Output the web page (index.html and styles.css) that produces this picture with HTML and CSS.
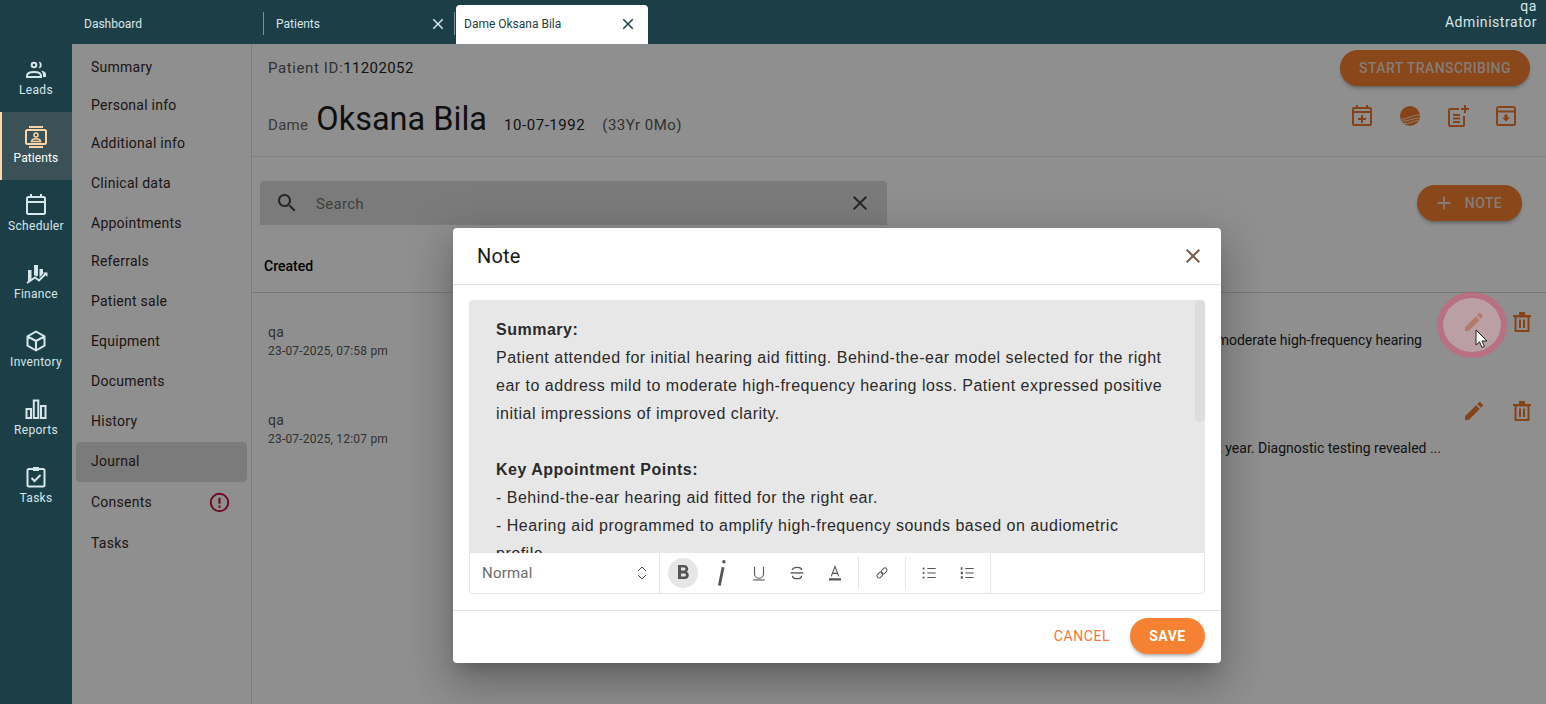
FILE: index.html
```html
<!DOCTYPE html>
<html lang="en">
<head>
<meta charset="utf-8">
<title>Patient journal</title>
<link rel="stylesheet" href="styles.css">
</head>
<body>
<div class="app">
  <header class="topbar">
    <div class="tab tab-dash"><span>Dashboard</span></div>
    <div class="tab tab-patients"><span>Patients</span>
      <svg class="tab-x" viewBox="0 0 24 24"><path d="M19 6.41L17.59 5 12 10.59 6.41 5 5 6.41 10.59 12 5 17.59 6.41 19 12 13.41 17.59 19 19 17.59 13.41 12z"/></svg>
    </div>
    <div class="tab tab-active"><span>Dame Oksana Bila</span>
      <svg class="tab-x" viewBox="0 0 24 24"><path d="M19 6.41L17.59 5 12 10.59 6.41 5 5 6.41 10.59 12 5 17.59 6.41 19 12 13.41 17.59 19 19 17.59 13.41 12z"/></svg>
    </div>
    <div class="user"><div>qa</div><div>Administrator</div></div>
  </header>
  <div class="body">
    <nav class="rail">
      <div class="rail-item">
        <svg viewBox="0 0 24 24" class="rail-icon"><circle cx="10" cy="8" r="2.300" fill="none" stroke="currentColor" stroke-width="2"/><path d="M14.500 4.800a3.200 3.200 0 0 1 0 6.400 5 5 0 0 0 0-6.400z" fill="currentColor"/><path d="M3 20v-1c0-2.500 3-4 7-4s7 1.500 7 4v1z" fill="none" stroke="currentColor" stroke-width="2"/><path d="M17 13.500c2.500.3 5 1.500 5 3.800V20h-3v-2c0-1.800-.8-3.300-2-4.500z" fill="currentColor"/></svg>
        <span>Leads</span>
      </div>
      <div class="rail-item rail-active">
        <svg viewBox="0 0 24 24" class="rail-icon"><path d="M5 1h14v2H5zM5 21h14v2H5z" fill="currentColor"/><rect x="2" y="5" width="20" height="14" rx="1.500" fill="none" stroke="currentColor" stroke-width="2"/><circle cx="12" cy="10" r="2" fill="none" stroke="currentColor" stroke-width="1.500"/><path d="M7.500 16.500c0-1.800 2-2.800 4.500-2.800s4.500 1 4.500 2.800z" fill="none" stroke="currentColor" stroke-width="1.500"/></svg>
        <span>Patients</span>
      </div>
      <div class="rail-item">
        <svg viewBox="0 0 24 24" class="rail-icon"><rect x="3" y="4" width="18" height="17" rx="1.500" fill="none" stroke="currentColor" stroke-width="2"/><path d="M3 8h18v2H3zM6 1h2v4H6zM16 1h2v4h-2z" fill="currentColor"/></svg>
        <span>Scheduler</span>
      </div>
      <div class="rail-item">
        <svg viewBox="0 0 24 24" class="rail-icon"><path d="M4 9h3.500v9.500L4 20.500zM10 4h4v10.500l-1.500 1-2.500-1.500zM15.500 8H19v5l-3.500 3.500z" fill="currentColor"/><path d="M3 22l8-5.500 4 3 7-7" fill="none" stroke="currentColor" stroke-width="2"/><path d="M19 11.500h4.500V16z" fill="currentColor"/></svg>
        <span>Finance</span>
      </div>
      <div class="rail-item">
        <svg viewBox="0 0 24 24" class="rail-icon"><path d="M12 2.500l8.500 4.800v9.400L12 21.500l-8.500-4.800V7.300zM3.500 7.300L12 12l8.500-4.700M12 12v9.500" fill="none" stroke="currentColor" stroke-width="2" stroke-linejoin="round"/></svg>
        <span>Inventory</span>
      </div>
      <div class="rail-item">
        <svg viewBox="0 0 24 24" class="rail-icon"><path d="M2.500 12h4.500v9H2.500zM9.800 3.500h4.500V21H9.800zM17 9h4.500v12H17z" fill="none" stroke="currentColor" stroke-width="2"/></svg>
        <span>Reports</span>
      </div>
      <div class="rail-item">
        <svg viewBox="0 0 24 24" class="rail-icon"><rect x="3.500" y="4" width="17" height="17.500" rx="1.500" fill="none" stroke="currentColor" stroke-width="2"/><path d="M9 2h6v4H9z" fill="currentColor"/><path d="M7.500 13l3 3 6-6" fill="none" stroke="currentColor" stroke-width="2"/></svg>
        <span>Tasks</span>
      </div>
    </nav>
    <aside class="subnav">
      <div class="sub-item">Summary</div>
      <div class="sub-item">Personal info</div>
      <div class="sub-item">Additional info</div>
      <div class="sub-item sub-gap">Clinical data</div>
      <div class="sub-item sub-gap">Appointments</div>
      <div class="sub-item">Referrals</div>
      <div class="sub-item sub-gap">Patient sale</div>
      <div class="sub-item sub-gap">Equipment</div>
      <div class="sub-item sub-gap">Documents</div>
      <div class="sub-item sub-gap">History</div>
      <div class="sub-item sub-active">Journal</div>
      <div class="sub-item sub-consents">Consents
        <svg class="alert" viewBox="0 0 24 24"><circle cx="12" cy="12" r="10" fill="none" stroke="currentColor" stroke-width="2.200"/><path d="M10.800 6.500h2.400v7h-2.400zM10.800 15.500h2.400V18h-2.400z" fill="currentColor"/></svg>
      </div>
      <div class="sub-item sub-last">Tasks</div>
    </aside>
    <main class="main">
      <section class="head">
        <div class="head-top">
          <div class="pid"><span class="muted">Patient ID:</span>11202052</div>
          <button class="btn btn-trans">START TRANSCRIBING</button>
        </div>
        <div class="head-bottom">
          <div class="identity">
            <span class="title-pre">Dame</span>
            <span class="name">Oksana Bila</span>
            <span class="dob">10-07-1992</span>
            <span class="age">(33Yr 0Mo)</span>
          </div>
          <div class="head-icons">
            <svg viewBox="0 0 24 24"><rect x="3" y="4" width="18" height="17" rx="1" fill="none" stroke="currentColor" stroke-width="2"/><path d="M3 7h18v2H3zM6 1h2v4H6zM16 1h2v4h-2zM11 11h2v3h3v2h-3v3h-2v-3H8v-2h3z" fill="currentColor"/></svg>
            <svg viewBox="0 0 24 24"><circle cx="12" cy="12" r="10" fill="currentColor"/><path d="M3 15c5 1 10-4 19-4M4 17c5 1 10-3 17-3M6 19.500c5 .5 9-2.500 14-3" fill="none" stroke="#f7d9c4" stroke-width="1"/></svg>
            <svg viewBox="0 0 24 24"><path d="M13 5H4a1 1 0 0 0-1 1v15a1 1 0 0 0 1 1h13a1 1 0 0 0 1-1v-9" fill="none" stroke="currentColor" stroke-width="2"/><path d="M18 1h2v3h3v2h-3v3h-2V6h-3V4h3zM7 10h7v2H7zM7 13.500h7v2H7zM7 17h7v2H7z" fill="currentColor"/></svg>
            <svg viewBox="0 0 24 24"><rect x="3" y="3" width="18" height="18" rx="1.500" fill="none" stroke="currentColor" stroke-width="2"/><path d="M3 6.500h18v2H3zM10.500 10.500h3v3H16l-4 4-4-4h2.500z" fill="currentColor"/></svg>
          </div>
        </div>
      </section>
      <section class="tools">
        <div class="search">
          <svg viewBox="0 0 24 24"><path d="M15.500 14h-.79l-.28-.27C15.410 12.590 16 11.110 16 9.500 16 5.910 13.090 3 9.500 3S3 5.910 3 9.500 5.910 16 9.500 16c1.610 0 3.090-.59 4.230-1.570l.27.28v.79l5 4.990L20.490 19l-4.990-5zm-6 0C7.010 14 5 11.990 5 9.500S7.010 5 9.500 5 14 7.010 14 9.500 11.990 14 9.500 14z"/></svg>
          <span class="search-text">Search</span>
          <svg viewBox="0 0 24 24"><path d="M19 6.410L17.590 5 12 10.590 6.410 5 5 6.410 10.590 12 5 17.590 6.410 19 12 13.410 17.590 19 19 17.590 13.410 12z"/></svg>
        </div>
        <button class="btn btn-note">
          <svg viewBox="0 0 24 24"><path d="M19 13h-6v6h-2v-6H5v-2h6V5h2v6h6v2z"/></svg>
          NOTE
        </button>
      </section>
      <div class="thead">Created</div>
      <div class="row">
        <div class="created"><div class="who">qa</div><div class="when">23-07-2025, 07:58 pm</div></div>
        <div class="note note-first"><span>Patient attended for initial hearing aid fitting. Behind-the-ear model selected to address mild to moderate high-frequency hearing</span></div>
        <div class="actions">
          <svg viewBox="0 0 24 24"><path d="M3 17.250V21h3.750L17.810 9.940l-3.750-3.750L3 17.250zM20.710 7.040c.39-.39.39-1.020 0-1.410l-2.340-2.340a.996.996 0 0 0-1.410 0l-1.830 1.830 3.750 3.750 1.830-1.830z"/></svg>
          <svg viewBox="0 0 24 24"><path d="M3 5h18v2H3zM9 2h6v3H9z"/><path d="M5.500 6.500h13V21h-13zM10 9.500V18M14 9.500V18" fill="none" stroke="currentColor" stroke-width="2"/></svg>
        </div>
      </div>
      <div class="row row-second">
        <div class="created"><div class="who">qa</div><div class="when">23-07-2025, 12:07 pm</div></div>
        <div class="note"><span>Patient reported gradual hearing difficulty over the last year. Diagnostic testing revealed ...</span></div>
        <div class="actions">
          <svg viewBox="0 0 24 24"><path d="M3 17.250V21h3.750L17.810 9.940l-3.750-3.750L3 17.250zM20.710 7.040c.39-.39.39-1.020 0-1.410l-2.340-2.340a.996.996 0 0 0-1.410 0l-1.830 1.830 3.750 3.750 1.830-1.830z"/></svg>
          <svg viewBox="0 0 24 24"><path d="M3 5h18v2H3zM9 2h6v3H9z"/><path d="M5.500 6.500h13V21h-13zM10 9.500V18M14 9.500V18" fill="none" stroke="currentColor" stroke-width="2"/></svg>
        </div>
      </div>
    </main>
    <div class="scrim"></div>
  </div>

  <div class="modal">
    <div class="modal-head">
      <span class="modal-title">Note</span>
      <svg viewBox="0 0 24 24"><path d="M19 6.410L17.590 5 12 10.590 6.410 5 5 6.410 10.590 12 5 17.590 6.410 19 12 13.410 17.590 19 19 17.590 13.410 12z"/></svg>
    </div>
    <div class="modal-body">
      <div class="editor">
        <div class="content">
          <div class="scrollbar"></div>
          <p><strong>Summary:</strong></p>
          <p>Patient attended for initial hearing aid fitting. Behind-the-ear model selected for the right ear to address mild to moderate high-frequency hearing loss. Patient expressed positive initial impressions of improved clarity.</p>
          <p>&nbsp;</p>
          <p><strong>Key Appointment Points:</strong></p>
          <p>- Behind-the-ear hearing aid fitted for the right ear.</p>
          <p>- Hearing aid programmed to amplify high-frequency sounds based on audiometric profile.</p>
        </div>
        <div class="toolbar">
          <div class="tb-select">
            <span>Normal</span>
            <svg viewBox="0 0 18 18"><path d="M5 7l4-4 4 4M5 11l4 4 4-4" fill="none" stroke="currentColor" stroke-width="1"/></svg>
          </div>
          <div class="tb-group tb-format">
            <span class="tb-btn tb-bold"><svg viewBox="0 0 24 24"><path d="M15.600 10.790c.97-.67 1.650-1.770 1.650-2.790 0-2.260-1.750-4-4-4H7v14h7.040c2.090 0 3.710-1.700 3.710-3.790 0-1.520-.86-2.820-2.150-3.420zM10 6.500h3c.830 0 1.500.670 1.500 1.500s-.67 1.500-1.500 1.500h-3v-3zm3.500 9H10v-3h3.500c.830 0 1.500.670 1.500 1.500s-.67 1.500-1.500 1.500z"/></svg></span>
            <span class="tb-btn"><svg class="tb-italic" viewBox="0 0 24 34"><path d="M14.500 10L10 32" fill="none" stroke="currentColor" stroke-width="3.400"/><circle cx="15.500" cy="3.500" r="2"/></svg></span>
            <span class="tb-btn tb-large"><svg viewBox="0 0 24 24"><path d="M6 3.500v9.500a6 6 0 0 0 12 0V3.500" fill="none" stroke="currentColor" stroke-width="1.500"/><path d="M4.500 20.500h15V22h-15z"/></svg></span>
            <span class="tb-btn tb-large"><svg viewBox="0 0 24 24"><path d="M18 8C18 5.500 15 4.500 12 4.500S6 5.500 6 8M6 15.500c0 2.500 3 4 6 4s6-1.500 6-4" fill="none" stroke="currentColor" stroke-width="1.800"/><path d="M3.500 11h17v1.800h-17z"/></svg></span>
            <span class="tb-btn tb-large"><svg viewBox="0 0 24 24"><path d="M7 16.500l5-13 5 13M8.700 12.500h6.600" fill="none" stroke="currentColor" stroke-width="1.500"/><path d="M4 19h16v3H4z"/></svg></span>
          </div>
          <div class="tb-group tb-link">
            <span class="tb-btn"><svg viewBox="0 0 24 24"><g fill="none" stroke="currentColor" stroke-width="1.200" transform="rotate(-45 12 12)"><rect x="4.500" y="9.500" width="8" height="5" rx="2.500"/><rect x="11.500" y="9.500" width="8" height="5" rx="2.500"/></g></svg></span>
          </div>
          <div class="tb-group tb-lists">
            <span class="tb-btn"><svg viewBox="0 0 24 24"><path d="M10 6h10v1.200H10zM10 11.400h10v1.200H10zM10 16.800h10v1.200H10z"/><circle cx="5.500" cy="6.600" r="1.300"/><circle cx="5.500" cy="12" r="1.300"/><circle cx="5.500" cy="17.400" r="1.300"/></svg></span>
            <span class="tb-btn"><svg viewBox="0 0 24 24"><path d="M10 6h10v1.200H10zM10 11.400h10v1.200H10zM10 16.800h10v1.200H10zM4.500 5h2v3h-2zM4.500 10.500H7v3H4.500zM4.500 16H7v3H4.500z"/></svg></span>
          </div>
        </div>
      </div>
    </div>
    <div class="modal-foot">
      <button class="btn-cancel">CANCEL</button>
      <button class="btn-save">SAVE</button>
    </div>
  </div>

  <div class="ripple"></div>
  <svg class="cursor" viewBox="0 0 14 20"><path d="M1 1v15l3.500-3.200L7 18.500l2.500-1.100L7 12h5z" fill="#fff" stroke="#222" stroke-width="1"/></svg>
</div>
</body>
</html>
```
FILE: styles.css
```css
* { box-sizing: border-box; }
html, body { margin: 0; height: 100%; overflow: hidden; }
body { font-family: Roboto, "Liberation Sans", sans-serif; font-size: 14px; color: #222; background: #f7f7f7; }
svg { display: block; fill: currentColor; }
button { font: inherit; border: 0; cursor: pointer; padding: 0; }

.app { position: relative; width: 1546px; height: 704px; display: flex; flex-direction: column; }

.topbar { height: 44px; flex: none; background: #1c3f47; display: flex; align-items: flex-end; color: #d7e6ea; font-size: 12px; position: relative; z-index: 3; }
.tab { display: flex; align-items: center; justify-content: space-between; height: 39px; }
.tab-dash { width: 191px; margin-left: 72px; padding: 0 0 1px 12px; }
.tab-patients { width: 192px; padding: 0 8px 1px 13px; position: relative; }
.tab-patients::before, .tab-patients::after { content: ""; position: absolute; top: 7px; height: 23px; width: 1px; background: #7d9297; }
.tab-patients::before { left: 0; }
.tab-patients::after { right: 0; }
.tab-active { width: 192px; margin-left: 1px; background: #fff; color: #1c3f47; border-radius: 4px 4px 0 0; padding: 0 11px 1px 8px; }
.tab-x { width: 18px; height: 18px; }
.user { margin-left: auto; align-self: flex-start; text-align: right; padding-right: 9px; font-size: 14px; line-height: 16px; margin-top: -2px; letter-spacing: .55px; font-weight: 400; }

.body { flex: 1; display: flex; position: relative; min-height: 0; }

.rail { width: 72px; flex: none; background: #1c3f47; color: #d7e6ea; position: relative; z-index: 3; font-size: 12px; }
.rail-item { height: 68px; display: flex; flex-direction: column; align-items: center; padding-top: 13px; border-left: 2px solid transparent; padding-right: 2px; }
.rail-item span { line-height: 16px; margin-top: 1px; white-space: nowrap; letter-spacing: .3px; }
.rail-icon { width: 24px; height: 24px; }
.rail-active { background: #3a5257; border-left-color: #ffd9a8; color: #fff; }
.rail-active span { letter-spacing: .1px; }
.rail-active .rail-icon { color: #ffd3a6; }

.subnav { width: 180px; flex: none; border-right: 1px solid #d8d8d8; padding: 4px 4px 0; color: #33261f; letter-spacing: .25px; }
.sub-item { height: 38px; line-height: 38px; padding-left: 15px; }
.sub-gap { margin-top: 2px; }
.sub-active { height: 40px; margin-top: 2px; background: #d5d5d5; border-radius: 4px; line-height: 38px; }
.sub-consents { margin-top: 1px; display: flex; align-items: center; justify-content: space-between; padding-right: 17px; }
.sub-last { margin-top: 3px; }
.alert { width: 21px; height: 21px; color: #c2093c; }

.main { flex: 1; min-width: 0; display: flex; flex-direction: column; }
.head { height: 113px; border-bottom: 1px solid #dcdcdc; padding: 6px 16px 0; }
.head-top { display: flex; justify-content: space-between; align-items: flex-start; }
.pid { font-size: 15px; line-height: 36px; color: #1f1f1f; letter-spacing: .4px; }
.muted { color: #555; letter-spacing: .6px; }
.head-bottom { display: flex; justify-content: space-between; align-items: center; margin-top: 11px; padding-right: 12px; }
.identity { display: flex; align-items: baseline; }
.title-pre { font-size: 15px; color: #666; margin-right: 8px; letter-spacing: .3px; }
.name { font-size: 32.500px; color: #1a1a1a; margin-right: 17px; line-height: 44px; }
.dob { font-size: 15px; color: #222; margin-right: 17px; letter-spacing: .55px; }
.age { font-size: 15px; color: #555; letter-spacing: .5px; }
.head-icons { display: flex; gap: 24px; color: #e8742a; margin-top: -6px; }
.head-icons svg { width: 24px; height: 24px; }

.btn { background: #ee7a2c; color: #e6d6cc; border-radius: 18px; height: 36px; font-weight: 500; letter-spacing: .4px; box-shadow: 0 3px 3px -2px rgba(0,0,0,.25), 0 3px 4px rgba(0,0,0,.14); display: flex; align-items: center; justify-content: center; }
.btn-trans { width: 190px; font-size: 14px; }
.btn-note { width: 105px; font-size: 14px; gap: 10px; padding-right: 2px; margin-top: 4px; }
.btn-note svg { width: 22px; height: 22px; margin-left: -2px; }

.tools { display: flex; justify-content: space-between; align-items: flex-start; padding: 24px 24px 0 8px; }
.search { width: 627px; height: 44px; background: #d5d5d5; border-radius: 4px 4px 0 0; display: flex; align-items: center; padding: 0 15px; color: #444; }
.search svg { width: 24px; height: 24px; flex: none; }
.search-text { flex: 1; font-size: 15px; color: #6a6a6a; padding: 2px 0 0 17px; letter-spacing: .3px; }

.thead { height: 68px; border-bottom: 1px solid #cfcfcf; padding: 32px 0 0 12px; font-weight: 500; line-height: 18px; color: #000; }

.row { display: flex; height: 88px; align-items: flex-start; }
.created { width: 216px; flex: none; padding: 30px 0 0 16px; color: #555; }
.who { line-height: 18px; letter-spacing: .2px; }
.when { font-size: 12px; line-height: 20px; letter-spacing: .2px; }
.note { flex: 1; min-width: 0; overflow: hidden; display: flex; justify-content: flex-end; padding: 38px 21px 0 0; line-height: 18px; color: #222; }
.note span { white-space: nowrap; flex: none; }
.note-first { padding-right: 40px; }
.row-second .note { padding-top: 58px; }
.actions { display: flex; gap: 24px; padding: 17px 12px 0 0; color: #e8742a; flex: none; }
.actions svg { width: 24px; height: 24px; }
.row-second .actions { padding-top: 18px; }

.scrim { position: absolute; inset: 0 0 0 72px; background: rgba(0,0,0,.42); z-index: 2; }

.modal { position: absolute; left: 453px; top: 228px; width: 768px; height: 435px; background: #fff; border-radius: 4px; z-index: 4; display: flex; flex-direction: column; box-shadow: 0 11px 15px -7px rgba(0,0,0,.2), 0 24px 38px 3px rgba(0,0,0,.14), 0 9px 46px 8px rgba(0,0,0,.12); }
.modal-head { height: 57px; flex: none; border-bottom: 1px solid #e2e2e2; display: flex; align-items: center; justify-content: space-between; padding: 0 16px 0 24px; color: #7a5a48; }
.modal-head svg { width: 24px; height: 24px; }
.modal-title { font-size: 20px; color: #1a1a1a; letter-spacing: .2px; }
.modal-body { flex: 1; min-height: 0; border-bottom: 1px solid #e2e2e2; padding: 15px 16px 16px; }
.editor { height: 294px; display: flex; flex-direction: column; }
.content { height: 253px; flex: none; background: #e7e7e7; border-radius: 4px 4px 0 0; overflow: hidden; padding: 16px 40px 0 27px; position: relative; font-family: "Liberation Sans", Arial, sans-serif; font-size: 16px; line-height: 28px; color: #2a2a2a; letter-spacing: .5px; }
.content p { margin: 0; }
.scrollbar { position: absolute; right: 0; top: 0; width: 10px; height: 122px; background: #dcdde1; border-radius: 5px; }
.toolbar { height: 41px; flex: none; border: 1px solid #e6e6e6; border-top: 0; border-radius: 0 0 4px 4px; display: flex; color: #555; }
.tb-select { width: 190px; flex: none; display: flex; align-items: center; justify-content: space-between; padding: 0 8px 0 12px; border-right: 1px solid #e6e6e6; font-size: 15px; color: #6b6b6b; letter-spacing: .2px; }
.tb-select svg { width: 18px; height: 18px; color: #444; }
.tb-group { display: flex; align-items: center; padding: 0 4px; border-right: 1px solid #e6e6e6; height: 32px; margin-top: 4px; gap: 8px; }
.tb-format { width: 199px; padding-left: 8px; }
.tb-link { width: 47px; padding-left: 8px; }
.tb-lists { width: 85px; padding-left: 8px; height: 41px; margin-top: -1px; }
.tb-btn { width: 30px; height: 30px; display: flex; align-items: center; justify-content: center; border-radius: 50%; flex: none; }
.tb-btn svg { width: 20px; height: 20px; }
.tb-large svg { width: 18px; height: 18px; }
.tb-bold { background: #e6e6e6; }
.tb-bold svg { width: 24px; height: 24px; }
.tb-btn .tb-italic { width: 20px; height: 30px; }
.modal-foot { height: 52px; flex: none; display: flex; justify-content: flex-end; align-items: center; padding: 0 16px 2px; gap: 20px; }
.btn-cancel { background: none; color: #f0783c; font-size: 14px; letter-spacing: .55px; }
.btn-save { width: 75px; height: 36px; border-radius: 18px; background: #f58233; color: #fff; font-weight: 700; font-size: 14px; letter-spacing: .5px; box-shadow: 0 3px 3px -2px rgba(0,0,0,.25), 0 3px 4px rgba(0,0,0,.14); }

.ripple { position: absolute; left: 1437px; top: 292px; width: 70px; height: 66px; border-radius: 50%; border: 6px solid rgba(225,81,117,.5); background: rgba(229,177,187,.5); background-clip: padding-box; z-index: 5; }
.cursor { position: absolute; left: 1475px; top: 329px; width: 14px; height: 20px; z-index: 6; }
```
